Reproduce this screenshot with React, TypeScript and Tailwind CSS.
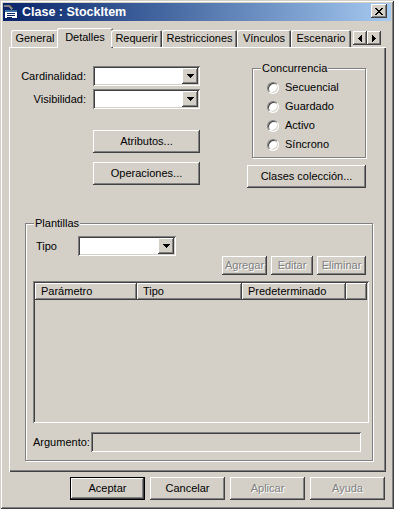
import type React from "react";

const raised =
  "shadow-[inset_-1px_-1px_#404040,inset_1px_1px_#ffffff,inset_-2px_-2px_#808080,inset_2px_2px_#d4d0c8]";
const sunken =
  "shadow-[inset_1px_1px_#808080,inset_-1px_-1px_#ffffff,inset_2px_2px_#404040,inset_-2px_-2px_#d4d0c8]";

type BtnProps = {
  label: string;
  className?: string;
  disabled?: boolean;
  isDefault?: boolean;
};

const Btn: React.FC<BtnProps> = ({ label, className = "", disabled, isDefault }) => {
  return (
    <div
      className={[
        "flex items-center justify-center bg-[#d4d0c8] shrink-0",
        raised,
        isDefault ? "border border-black" : "",
        className,
      ].join(" ")}
    >
      <span className={disabled ? "text-[#808080] [text-shadow:1px_1px_0_#ffffff]" : "text-black"}>
        {label}
      </span>
    </div>
  );
};

const DownArrow = () => (
  <svg width="7" height="4" shapeRendering="crispEdges">
    <path d="M0 0h7v1H0zM1 1h5v1H1zM2 2h3v1H2zM3 3h1v1H3z" fill="#000" />
  </svg>
);

const Combo: React.FC<{ className?: string }> = ({ className = "" }) => {
  return (
    <div className={`flex justify-end p-[2px] bg-white ${sunken} ${className}`}>
      <div className={`w-[16px] h-full flex items-center justify-center bg-[#d4d0c8] ${raised}`}>
        <DownArrow />
      </div>
    </div>
  );
};

const Radio = () => (
  <div className="w-[12px] h-[12px] shrink-0 rounded-full bg-white border border-t-[#808080] border-l-[#808080] border-r-white border-b-white shadow-[inset_1px_1px_#404040,inset_-1px_-1px_#d4d0c8]" />
);

type GroupProps = { title: string; className?: string; children: React.ReactNode };

const Group: React.FC<GroupProps> = ({ title, className = "", children }) => {
  return (
    <div
      className={`relative border border-[#808080] shadow-[1px_1px_0_#ffffff,inset_1px_1px_0_#ffffff] ${className}`}
    >
      <span className="absolute -top-[7px] left-[8px] px-[1px] bg-[#d4d0c8] leading-[13px]">{title}</span>
      {children}
    </div>
  );
};

const tabBase =
  "flex items-center justify-center bg-[#d4d0c8] rounded-t-[2px] shrink-0 shadow-[inset_1px_1px_#ffffff,inset_-1px_0_#404040,inset_-2px_0_#808080]";

const TitleIcon = () => (
  <svg width="16" height="16" shapeRendering="crispEdges">
    <rect x="1.5" y="5.5" width="13" height="9" fill="#fff" stroke="#0a246a" />
    <rect x="2" y="6" width="12" height="2" fill="#3a6ea5" />
    <path d="M4 9.5h8M4 11.5h8M4 13h5" stroke="#0a246a" />
    <path d="M1 1h6l3 3-2 2-3-3H1z" fill="#808080" />
    <path d="M7 1l3 3" stroke="#404040" />
  </svg>
);

export default function App() {
  return (
    <div className="w-[394px] h-[509px] bg-[#d4d0c8] p-[3px] flex flex-col font-['Liberation_Sans',Arial,sans-serif] text-[11px] leading-none text-black shadow-[inset_1px_1px_#d4d0c8,inset_-1px_-1px_#404040,inset_2px_2px_#ffffff,inset_-2px_-2px_#808080]">
      {/* title bar */}
      <div className="h-[18px] flex items-center bg-linear-to-r from-[#0a246a] to-[#a6caf0] pr-[4px]">
        <TitleIcon />
        <span className="ml-[3px] text-white font-bold text-[12.5px]">Clase : StockItem</span>
        <div className={`ml-auto self-start mt-[1px] w-[16px] h-[14px] flex items-center justify-center bg-[#d4d0c8] ${raised}`}>
          <svg width="8" height="7" shapeRendering="crispEdges">
            <path d="M0 0h2v1H0zM6 0h2v1H6zM1 1h2v1H1zM5 1h2v1H5zM2 2h4v1H2zM3 3h2v1H3zM2 4h4v1H2zM1 5h2v1H1zM5 5h2v1H5zM0 6h2v1H0zM6 6h2v1H6z" fill="#000" />
          </svg>
        </div>
      </div>

      {/* tabs */}
      <div className="mt-[7px] ml-[8px] h-[19px] flex items-end relative z-10">
        <div className={`${tabBase} w-[48px] h-[17px]`}>General</div>
        <div className={`${tabBase} w-[56px] h-[20px] -mx-[2px] -mb-px pb-[2px]`}>Detalles</div>
        <div className={`${tabBase} w-[51px] h-[17px]`}>Requerir</div>
        <div className={`${tabBase} w-[75px] h-[17px]`}>Restricciones</div>
        <div className={`${tabBase} w-[54px] h-[17px]`}>Vínculos</div>
        <div className={`${tabBase} w-[60px] h-[17px]`}>Escenario</div>
        <div className={`ml-[2px] mb-[2px] w-[14px] h-[14px] flex items-center justify-center bg-[#d4d0c8] ${raised}`}>
          <svg width="4" height="7" shapeRendering="crispEdges">
            <path d="M3 0h1v7H3zM2 1h1v5H2zM1 2h1v3H1zM0 3h1v1H0z" fill="#000" />
          </svg>
        </div>
        <div className={`mb-[2px] w-[14px] h-[14px] flex items-center justify-center bg-[#d4d0c8] ${raised}`}>
          <svg width="4" height="7" shapeRendering="crispEdges">
            <path d="M0 0h1v7H0zM1 1h1v5H1zM2 2h1v3H2zM3 3h1v1H3z" fill="#000" />
          </svg>
        </div>
      </div>

      {/* tab panel */}
      <div className="ml-[6px] w-[377px] h-[425px] flex flex-col shadow-[inset_1px_1px_#ffffff,inset_-1px_-1px_#404040,inset_-2px_-2px_#808080]">
        <div className="h-[176px] flex">
          <div className="ml-[15px] w-[176px] pt-[19px] flex flex-col">
            <div className="grid grid-cols-[62px_107px] gap-x-[7px] gap-y-[3px] auto-rows-[20px]">
              <div className="flex items-center justify-end">Cardinalidad:</div>
              <Combo />
              <div className="flex items-center justify-end">Visibilidad:</div>
              <Combo />
            </div>
            <Btn label="Atributos..." className="ml-[69px] mt-[21px] w-[107px] h-[23px]" />
            <Btn label="Operaciones..." className="ml-[69px] mt-[9px] w-[107px] h-[23px]" />
          </div>

          <div className="ml-[47px] pt-[21px] flex flex-col">
            <Group title="Concurrencia" className="ml-[5px] w-[114px] h-[90px] pt-[9px] pl-[14px]">
              {["Secuencial", "Guardado", "Activo", "Síncrono"].map((label) => (
                <div key={label} className="h-[19px] flex items-center gap-[6px]">
                  <Radio />
                  {label}
                </div>
              ))}
            </Group>
            <Btn label="Clases colección..." className="mt-[7px] w-[119px] h-[23px]" />
          </div>
        </div>

        <Group title="Plantillas" className="ml-[16px] w-[348px] h-[238px] flex flex-col">
          <div className="mt-[12px] pl-[10px] flex items-center">
            <span className="w-[42px]">Tipo</span>
            <Combo className="w-[98px] h-[20px]" />
          </div>
          <div className="flex justify-end gap-[4px] pr-[6px]">
            <Btn disabled label="Agregar" className="w-[45px] h-[19px]" />
            <Btn disabled label="Editar" className="w-[42px] h-[19px]" />
            <Btn disabled label="Eliminar" className="w-[49px] h-[19px]" />
          </div>
          <div className={`mt-[6px] ml-[7px] w-[336px] h-[142px] p-[2px] ${sunken}`}>
            <div className="flex h-[17px]">
              <div className={`w-[102px] flex items-center pl-[6px] ${raised}`}>Parámetro</div>
              <div className={`w-[105px] flex items-center pl-[6px] ${raised}`}>Tipo</div>
              <div className={`w-[104px] flex items-center pl-[6px] ${raised}`}>Predeterminado</div>
              <div className={`w-[21px] ${raised}`} />
            </div>
          </div>
          <div className="mt-[9px] ml-[7px] flex items-center">
            <span className="w-[58px]">Argumento:</span>
            <div className={`w-[270px] h-[20px] ${sunken}`} />
          </div>
        </Group>
      </div>

      {/* dialog buttons */}
      <div className="mt-[5px] pl-[67px] flex gap-[5px]">
        <Btn isDefault label="Aceptar" className="w-[75px] h-[23px]" />
        <Btn label="Cancelar" className="w-[75px] h-[23px]" />
        <Btn disabled label="Aplicar" className="w-[75px] h-[23px]" />
        <Btn disabled label="Ayuda" className="w-[75px] h-[23px]" />
      </div>
    </div>
  );
}
